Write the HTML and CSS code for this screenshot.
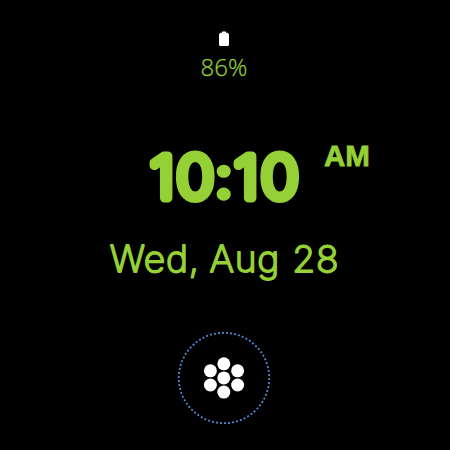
FILE: index.html
```html
<!DOCTYPE html>
<html lang="en">
<head>
<meta charset="utf-8">
<title>Watch face</title>
<link rel="stylesheet" href="styles.css">
</head>
<body>
<main class="face">
  <svg class="battery" viewBox="0 0 12 16"><path d="M4 .5h4v1.3h1.7L11 3.5v10q0 1.5-1.5 1.5h-7Q1 15 1 13.5v-10l1.3-1.7H4z"/></svg>
  <div class="percent">86%</div>
  <div class="clock">
    <svg class="time" viewBox="0 0 160 84"><text transform="scale(1.07 1)" x="6.9 31.3 67 85.6 110.3" y="63.3">10<tspan class="colon">:</tspan>10</text></svg>
    <span class="period">AM</span>
  </div>
  <svg class="date" viewBox="0 0 240 50"><text transform="scale(1.035 1)" y="35"><tspan x="4.5">Wed,</tspan> <tspan x="101">Aug</tspan> <tspan x="181">28</tspan></text></svg>
  <svg class="apps" viewBox="0 0 94 94">
    <circle class="ring" cx="47" cy="47" r="45.2" pathLength="280"/>
    <g class="dots"><circle cx="46.8" cy="46.9" r="6.5"/><circle cx="46.8" cy="32.8" r="6.5"/><circle cx="46.8" cy="61.1" r="6.5"/><circle cx="33.4" cy="39.8" r="6.5"/><circle cx="60.6" cy="39.8" r="6.5"/><circle cx="33.4" cy="54" r="6.5"/><circle cx="60.6" cy="54" r="6.5"/></g>
  </svg>
</main>
</body>
</html>
```
FILE: styles.css
```css
body { margin: 0; background: #000; }
.face { width: 448px; height: 450px; box-sizing: border-box; padding-top: 31px; display: flex; flex-direction: column; align-items: center; color: #94d036; }
svg { display: block; flex-shrink: 0; overflow: visible; }
.battery { width: 12px; height: 16px; fill: #fff; }
.percent { margin-top: 3px; font: 300 24px/34px "Open Sans", sans-serif; -webkit-text-stroke: .25px #94d036; }
.clock { width: 448px; height: 84px; margin-top: 51px; display: flex; align-items: flex-start; }
.time { width: 160px; height: 84px; margin-left: 143px; }
.time text { font: 200 58px Inter, sans-serif; fill: #94d036; stroke: #94d036; stroke-width: 9px; stroke-linejoin: round; }
.time .colon { font-weight: 400; stroke-width: 5.5px; }
.period { margin: 3px 0 0 21px; font: 700 29.5px/36px "Liberation Sans", sans-serif; -webkit-text-stroke: .8px #94d036; }
.date { width: 240px; height: 50px; margin: 18px 0 0 2px; }
.date text { font: 200 36px Inter, sans-serif; letter-spacing: .7px; fill: #94d036; stroke: #94d036; stroke-width: 1.8px; stroke-linejoin: round; }
.apps { width: 94px; height: 94px; margin-top: 44px; }
.ring { fill: none; stroke: #4c88cf; stroke-width: 1.8px; stroke-dasharray: 2 2; }
.dots { fill: #fff; }
```
